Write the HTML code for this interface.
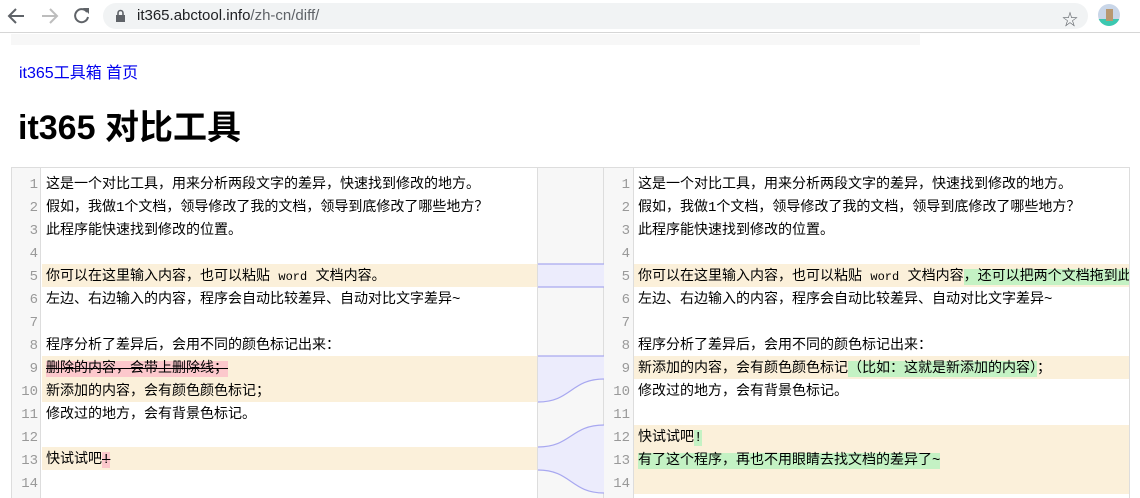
<!DOCTYPE html>
<html><head><meta charset="utf-8"><style>
*{margin:0;padding:0;box-sizing:border-box}
body{width:1140px;height:498px;overflow:hidden;background:#fff;font-family:"Liberation Sans","Noto Sans CJK SC",sans-serif;position:relative}
.abs{position:absolute}
.code{font-family:"Liberation Mono","Noto Sans CJK SC","WenQuanYi Zen Hei",monospace;font-size:14px;color:#000}
.row{position:absolute;height:23px;line-height:23px;white-space:nowrap;margin-top:2px}
.num{position:absolute;width:28px;text-align:right;color:#999;font-size:14px;height:23px;line-height:23px;margin-top:2px}
.mod{background:#fbf0da}
.add{background:#c4f2c4}
.del{background:#fcc8cc;text-decoration:line-through}
.w{font-size:12px}
</style></head><body>
<div class="abs" style="left:0;top:0;width:1140px;height:33px;background:#fff;border-bottom:1px solid #d6d6d6"></div>
<svg class="abs" style="left:0;top:0" width="100" height="32">
<g fill="none" stroke-width="2">
<path d="M24 16H10M16 9l-7 7 7 7" stroke="#5f6368"/>
<path d="M42 16h14M50 9l7 7-7 7" stroke="#bdbdbd"/>
<path d="M87 12a6.5 6.5 0 1 0 1 5" stroke="#5f6368"/>
</g>
<path d="M83 8h6v6z" fill="#5f6368"/>
</svg>
<div class="abs" style="left:103px;top:3px;width:985px;height:26px;border-radius:13px;background:#f1f3f4"></div>
<svg class="abs" style="left:115px;top:9px" width="12" height="14"><rect x="1" y="6" width="9" height="7" fill="#5f6368"/><path d="M3 6V4a2.5 2.5 0 0 1 5 0v2" stroke="#5f6368" stroke-width="1.6" fill="none"/></svg>
<div class="abs" style="left:137px;top:6px;font-size:15px;color:#202124;line-height:20px">it365.abctool.info<span style="color:#5f6368">/zh-cn/diff/</span></div>
<div class="abs" style="left:1062px;top:6px;font-size:16px;color:#5f6368">☆</div>
<div class="abs" style="left:1098px;top:4px;width:22px;height:22px;border-radius:50%;background:#c9d6e8;overflow:hidden"><div style="position:absolute;bottom:0;width:22px;height:7px;background:#3cc8b0"></div><div style="position:absolute;left:8px;top:5px;width:7px;height:12px;background:#b89870"></div></div>
<div class="abs" style="left:11px;top:34px;width:909px;height:11px;background:#f7f7f7"></div>
<div class="abs" style="left:19px;top:62px;font-size:16px;color:#0000ee;line-height:24px">it365工具箱 首页</div>
<div class="abs" style="left:18px;top:106px;font-size:34px;font-weight:bold;color:#000;line-height:44px">it365 对比工具</div>

<div class="abs" style="left:11px;top:167px;width:1119px;height:331px;border:1px solid #ddd;border-bottom:none"></div>
<div class="abs" style="left:12px;top:168px;width:29px;height:330px;background:#f7f7f7;border-right:1px solid #ddd"></div>
<div class="abs" style="left:537px;top:168px;width:67px;height:330px;background:#f7f7f7;border-left:1px solid #ddd;border-right:1px solid #ddd"></div>
<div class="abs" style="left:604px;top:168px;width:30px;height:330px;background:#f7f7f7;border-right:1px solid #ddd"></div>

<div class="abs mod" style="left:42px;top:264px;width:495px;height:23px"></div>
<div class="abs mod" style="left:42px;top:356px;width:495px;height:46px"></div>
<div class="abs mod" style="left:42px;top:447px;width:495px;height:23px"></div>
<div class="abs mod" style="left:634px;top:264px;width:495px;height:23px"></div>
<div class="abs mod" style="left:634px;top:356px;width:495px;height:23px"></div>
<div class="abs mod" style="left:634px;top:425px;width:495px;height:69px"></div>

<svg class="abs" style="left:538px;top:168px" width="66" height="330">
<g fill="#ececfc" stroke="none">
<rect x="0" y="96" width="66" height="23"/>
<path d="M0 188H66V211C33 211 33 234 0 234Z"/>
<path d="M0 279C33 279 33 257 66 257V325C33 325 33 302 0 302Z"/>
</g>
<g fill="none" stroke="#a8a8f0" stroke-width="1.2">
<path d="M0 96H66M0 119H66M0 188H66"/>
<path d="M0 234C33 234 33 211 66 211"/>
<path d="M0 279C33 279 33 257 66 257"/>
<path d="M0 302C33 302 33 325 66 325"/>
</g>
</svg>

<div class="code">
<div class="num abs" style="left:10px;top:172px">1</div><div class="num abs" style="left:10px;top:195px">2</div><div class="num abs" style="left:10px;top:218px">3</div><div class="num abs" style="left:10px;top:241px">4</div><div class="num abs" style="left:10px;top:264px">5</div><div class="num abs" style="left:10px;top:287px">6</div><div class="num abs" style="left:10px;top:310px">7</div><div class="num abs" style="left:10px;top:333px">8</div><div class="num abs" style="left:10px;top:356px">9</div><div class="num abs" style="left:10px;top:379px">10</div><div class="num abs" style="left:10px;top:402px">11</div><div class="num abs" style="left:10px;top:425px">12</div><div class="num abs" style="left:10px;top:448px">13</div><div class="num abs" style="left:10px;top:471px">14</div>

<div class="row" style="left:46px;top:172px">这是一个对比工具，用来分析两段文字的差异，快速找到修改的地方。</div>
<div class="row" style="left:46px;top:195px">假如，我做1个文档，领导修改了我的文档，领导到底修改了哪些地方？</div>
<div class="row" style="left:46px;top:218px">此程序能快速找到修改的位置。</div>
<div class="row" style="left:46px;top:264px">你可以在这里输入内容，也可以粘贴 <span class="w">word</span> 文档内容。</div>
<div class="row" style="left:46px;top:287px">左边、右边输入的内容，程序会自动比较差异、自动对比文字差异~</div>
<div class="row" style="left:46px;top:333px">程序分析了差异后，会用不同的颜色标记出来：</div>
<div class="row" style="left:46px;top:356px"><span class="del">删除的内容，会带上删除线；</span></div>
<div class="row" style="left:46px;top:379px">新添加的内容，会有颜色颜色标记；</div>
<div class="row" style="left:46px;top:402px">修改过的地方，会有背景色标记。</div>
<div class="row" style="left:46px;top:447px">快试试吧<span class="del">!</span></div>

<div class="num abs" style="left:602px;top:172px">1</div><div class="num abs" style="left:602px;top:195px">2</div><div class="num abs" style="left:602px;top:218px">3</div><div class="num abs" style="left:602px;top:241px">4</div><div class="num abs" style="left:602px;top:264px">5</div><div class="num abs" style="left:602px;top:287px">6</div><div class="num abs" style="left:602px;top:310px">7</div><div class="num abs" style="left:602px;top:333px">8</div><div class="num abs" style="left:602px;top:356px">9</div><div class="num abs" style="left:602px;top:379px">10</div><div class="num abs" style="left:602px;top:402px">11</div><div class="num abs" style="left:602px;top:425px">12</div><div class="num abs" style="left:602px;top:448px">13</div><div class="num abs" style="left:602px;top:471px">14</div>

<div class="row" style="left:638px;top:172px">这是一个对比工具，用来分析两段文字的差异，快速找到修改的地方。</div>
<div class="row" style="left:638px;top:195px">假如，我做1个文档，领导修改了我的文档，领导到底修改了哪些地方？</div>
<div class="row" style="left:638px;top:218px">此程序能快速找到修改的位置。</div>
<div class="row" style="left:638px;top:264px;width:491px;overflow:hidden">你可以在这里输入内容，也可以粘贴 <span class="w">word</span> 文档内容<span class="add">，还可以把两个文档拖到此</span></div>
<div class="row" style="left:638px;top:287px">左边、右边输入的内容，程序会自动比较差异、自动对比文字差异~</div>
<div class="row" style="left:638px;top:333px">程序分析了差异后，会用不同的颜色标记出来：</div>
<div class="row" style="left:638px;top:356px">新添加的内容，会有颜色颜色标记<span class="add">（比如：这就是新添加的内容）</span>；</div>
<div class="row" style="left:638px;top:379px">修改过的地方，会有背景色标记。</div>
<div class="row" style="left:638px;top:425px">快试试吧<span class="add">!</span></div>
<div class="row" style="left:638px;top:448px"><span class="add">有了这个程序，再也不用眼睛去找文档的差异了~</span></div>
</div>
</body></html>
